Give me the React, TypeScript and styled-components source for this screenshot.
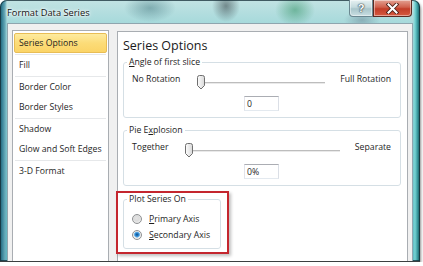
import React from 'react'
import styled, { createGlobalStyle } from 'styled-components'

const GlobalStyle = createGlobalStyle`
  html, body {
    margin: 0;
    padding: 0;
    background: #ffffff;
  }
  body {
    font-family: 'Open Sans', 'Noto Sans', sans-serif;
    color: #1e1e1e;
  }
`

const Window = styled.div`
  box-sizing: border-box;
  width: 420px;
  height: 262px;
  display: flex;
  flex-direction: column;
  padding: 0 7px;
  border-radius: 7px 7px 0 0;
  border-bottom: 1px solid #3b3f41;
  box-shadow: inset 0 0 0 1px rgba(20, 45, 55, 0.75), 1px 2px 3px rgba(0, 0, 0, 0.45);
  background:
    radial-gradient(ellipse 26px 14px at 150px 8px, rgba(40, 95, 105, 0.4), transparent),
    radial-gradient(ellipse 14px 16px at 226px 6px, rgba(40, 50, 55, 0.5), transparent),
    radial-gradient(ellipse 20px 16px at 295px 10px, rgba(40, 140, 90, 0.5), transparent),
    radial-gradient(ellipse 18px 10px at 362px 20px, rgba(90, 110, 130, 0.4), transparent),
    linear-gradient(to right, #1e5a70 0, #357f94 2px, #66a9b8 5px, rgba(255, 255, 255, 0) 7px),
    linear-gradient(to left, #1c4a50 0, #2f8d93 2px, #74d3d3 5px, rgba(255, 255, 255, 0) 7px),
    linear-gradient(to bottom, #c2e3e3 0, #a3d8da 26px, #5bb8c2 100%);
  overflow: hidden;
`

const TitleBar = styled.div`
  height: 23px;
  flex: none;
  display: flex;
  align-items: flex-start;
`

const Title = styled.div`
  font-size: 9.3px;
  line-height: 12px;
  margin-top: 7px;
  color: #111;
  text-shadow: 0 0 6px #fff, 0 0 3px #fff, 0 0 2px #fff;
  flex: 1;
`

const CaptionButtons = styled.div`
  display: flex;
  margin-right: 1px;
`

const CaptionButton = styled.div<{ $close?: boolean }>`
  box-sizing: border-box;
  width: ${p => (p.$close ? 39 : 24)}px;
  height: 17px;
  display: flex;
  align-items: center;
  justify-content: center;
  border: 1px solid ${p => (p.$close ? '#5b2a22' : '#6a8790')};
  border-top: none;
  border-radius: ${p => (p.$close ? '0 0 4px 0' : '0 0 0 4px')};
  background: ${p =>
    p.$close
      ? 'linear-gradient(to bottom, #e3a293 0, #d0604c 45%, #c23d28 55%, #d6593f 100%)'
      : 'linear-gradient(to bottom, #e6f1f2 0, #c4dadd 45%, #a9c6cb 55%, #c9dfe2 100%)'};
  box-shadow: inset 0 0 0 1px rgba(255, 255, 255, 0.45);
  font-family: 'Liberation Sans', sans-serif;
  font-weight: bold;
  font-size: 11px;
  color: #fff;
  text-shadow: 0 0 1px #3b4a50, 0 0 1px #3b4a50, 0 0 2px #3b4a50;
`

const Client = styled.div`
  flex: 1;
  min-height: 0;
  display: flex;
  gap: 8px;
  padding: 6px 4px 0;
  border: 1px solid #8fa5ae;
  border-bottom: none;
  background: #f0f0f0;
`

const NavList = styled.div`
  width: 97px;
  flex: none;
  box-sizing: border-box;
  background: #fff;
  border: 1px solid #a9adb2;
  border-bottom: none;
  padding: 2px 1px;
`

const NavItem = styled.div<{ $selected?: boolean }>`
  height: 20px;
  box-sizing: border-box;
  display: flex;
  align-items: center;
  padding-left: 4px;
  font-size: 8.7px;
  white-space: nowrap;
  border: 1px solid ${p => (p.$selected ? '#e8bd55' : 'transparent')};
  border-radius: 2px;
  background: ${p => (p.$selected ? 'linear-gradient(to bottom, #fdeba0 0, #fcdc78 50%, #fbd467 100%)' : 'transparent')};
`

const NavSeparator = styled.div`
  height: 1px;
  margin: 1px 1px 0;
  background: #e6e8ea;
`

const Panel = styled.div`
  flex: 1;
  margin-top: 1px;
  background: #fff;
  border: 1px solid #a9adb2;
  border-bottom: none;
  padding: 0 6px 0 5px;
`

const Heading = styled.div`
  font-size: 12.5px;
  line-height: 17px;
  margin-top: 5px;
  color: #1a1a1a;
`

const Group = styled.fieldset<{ $gap: number }>`
  box-sizing: border-box;
  margin: ${p => p.$gap}px 0 0;
  padding: 0 3px;
  min-width: 0;
  border: 1px solid #d5dfe5;
  border-radius: 3px;
`

const GroupTitle = styled.legend`
  padding: 0 2px;
  font-size: 8.7px;
  line-height: 12px;
  color: #1e1e1e;
`

const GroupBody = styled.div`
  padding: 0 6px 6px 5px;
`

const Key = styled.span`
  text-decoration: underline;
  text-underline-offset: 1px;
`

const SliderRow = styled.div`
  display: flex;
  align-items: flex-start;
  height: 14px;
  margin-top: 7px;
`

const SideLabel = styled.span`
  font-size: 8.7px;
  line-height: 14px;
  margin-top: -3px;
  white-space: nowrap;
`

const Slider = styled.div`
  flex: 1;
  display: flex;
  align-items: center;
  height: 14px;
  margin: 0 15px 0 16px;
`

const Track = styled.div`
  flex: 1;
  height: 2px;
  margin-left: -1px;
  margin-top: 1px;
  background: linear-gradient(to bottom, #bdbdbd 50%, #e9e9e9 50%);
`

const ValueRow = styled.div`
  display: flex;
  justify-content: center;
  margin-top: 7px;
`

const ValueBox = styled.input`
  box-sizing: border-box;
  width: 35px;
  height: 15px;
  margin: 0;
  padding: 0 0 0 2px;
  font-family: 'Open Sans', 'Noto Sans', sans-serif;
  font-size: 8.7px;
  color: #1e1e1e;
  background: #fff;
  border: 1px solid;
  border-color: #abadb3 #dbdfe6 #e3e9ef #e2e3ea;
  outline: none;
`

const Highlight = styled.div`
  position: relative;
  width: 98px;
  margin-top: 7px;
  &::after {
    content: '';
    position: absolute;
    left: -7px;
    right: -8px;
    top: -2px;
    bottom: -5px;
    border: 2px solid #c4262e;
    box-shadow: 2px 2px 3px rgba(0, 0, 0, 0.25);
    pointer-events: none;
  }
`

const RadioList = styled.div`
  padding: 6px 0 5px 5px;
`

const RadioRow = styled.div`
  display: flex;
  align-items: center;
  gap: 7px;
  height: 16px;
  font-size: 8.7px;
  white-space: nowrap;
`

const RadioDot = styled.span<{ $checked?: boolean }>`
  box-sizing: border-box;
  width: 10px;
  height: 10px;
  flex: none;
  border-radius: 50%;
  border: 1px solid #8e9092;
  background: ${p =>
    p.$checked
      ? 'radial-gradient(circle at 50% 45%, #0f4e86 0, #2a82cd 1.6px, #7dc0ee 2.8px, #e9e9e9 3.2px, #fbfbfb 100%)'
      : 'radial-gradient(circle at 45% 40%, #e4e4e4 0, #dcdcdc 2.5px, #f6f6f6 100%)'};
`

const Thumb = () => (
  <svg width="10" height="15" viewBox="0 0 10 15" style={{ flex: 'none' }}>
    <defs>
      <linearGradient id="thumbFill" x1="0" x2="1" y1="0" y2="0">
        <stop offset="0" stopColor="#fdfdfd" />
        <stop offset="1" stopColor="#d8d8d8" />
      </linearGradient>
    </defs>
    <path
      d="M1.5 2.5 Q1.5 0.5 3.5 0.5 H6.5 Q8.5 0.5 8.5 2.5 V10.5 L5 14 L1.5 10.5 Z"
      fill="url(#thumbFill)"
      stroke="#6f6f6f"
    />
  </svg>
)

const CloseGlyph = () => (
  <svg width="13" height="11" viewBox="0 0 13 11">
    <path d="M2.5 1.5 L10.5 9.5 M10.5 1.5 L2.5 9.5" stroke="#4a2018" strokeWidth="3.8" strokeLinecap="square" />
    <path d="M2.5 1.5 L10.5 9.5 M10.5 1.5 L2.5 9.5" stroke="#ffffff" strokeWidth="2.1" strokeLinecap="square" />
  </svg>
)

const navGroups = [
  ['Series Options'],
  ['Fill'],
  ['Border Color', 'Border Styles'],
  ['Shadow', 'Glow and Soft Edges'],
  ['3-D Format'],
]

const SliderGroup = ({
  title,
  left,
  right,
  value,
  gap,
}: {
  title: React.ReactNode
  left: string
  right: string
  value: string
  gap: number
}) => (
  <Group $gap={gap}>
    <GroupTitle>{title}</GroupTitle>
    <GroupBody>
      <SliderRow>
        <SideLabel>{left}</SideLabel>
        <Slider>
          <Thumb />
          <Track />
        </Slider>
        <SideLabel>{right}</SideLabel>
      </SliderRow>
      <ValueRow>
        <ValueBox readOnly value={value} />
      </ValueRow>
    </GroupBody>
  </Group>
)

export default function App() {
  return (
    <>
      <GlobalStyle />
      <Window>
        <TitleBar>
          <Title>Format Data Series</Title>
          <CaptionButtons>
            <CaptionButton>?</CaptionButton>
            <CaptionButton $close>
              <CloseGlyph />
            </CaptionButton>
          </CaptionButtons>
        </TitleBar>
        <Client>
          <NavList>
            {navGroups.map((group, i) => (
              <React.Fragment key={i}>
                {i > 0 && <NavSeparator />}
                {group.map(label => (
                  <NavItem key={label} $selected={label === 'Series Options'}>
                    {label}
                  </NavItem>
                ))}
              </React.Fragment>
            ))}
          </NavList>
          <Panel>
            <Heading>Series Options</Heading>
            <SliderGroup
              gap={2}
              title={
                <>
                  <Key>A</Key>ngle of first slice
                </>
              }
              left="No Rotation"
              right="Full Rotation"
              value="0"
            />
            <SliderGroup
              gap={6}
              title={
                <>
                  Pie E<Key>x</Key>plosion
                </>
              }
              left="Together"
              right="Separate"
              value="0%"
            />
            <Highlight>
              <Group $gap={0}>
                <GroupTitle>Plot Series On</GroupTitle>
                <RadioList>
                  <RadioRow>
                    <RadioDot />
                    <span>
                      <Key>P</Key>rimary Axis
                    </span>
                  </RadioRow>
                  <RadioRow>
                    <RadioDot $checked />
                    <span>
                      <Key>S</Key>econdary Axis
                    </span>
                  </RadioRow>
                </RadioList>
              </Group>
            </Highlight>
          </Panel>
        </Client>
      </Window>
    </>
  )
}
